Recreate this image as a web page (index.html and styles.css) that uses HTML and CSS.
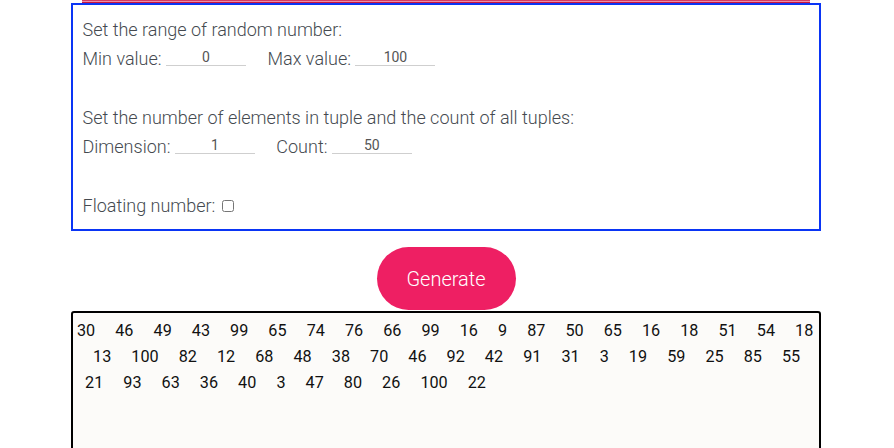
FILE: index.html
```html
<!DOCTYPE html>
<html lang="en">
<head>
<meta charset="utf-8">
<title>Random number generator</title>
<link rel="stylesheet" href="styles.css">
</head>
<body>
<div class="page">
  <div class="header-edge"></div>
  <form class="settings">
    <div class="group">
      <div class="line">Set the range of random number:</div>
      <div class="row">
        <label class="field">Min value: <input class="num" type="text" value="0"></label>
        <label class="field">Max value: <input class="num" type="text" value="100"></label>
      </div>
    </div>
    <div class="group">
      <div class="line">Set the number of elements in tuple and the count of all tuples:</div>
      <div class="row">
        <label class="field">Dimension: <input class="num" type="text" value="1"></label>
        <label class="field">Count: <input class="num" type="text" value="50"></label>
      </div>
    </div>
    <div class="group">
      <label class="line">Floating number: <input class="check" type="checkbox"></label>
    </div>
  </form>
  <button class="generate" type="button">Generate</button>
  <div class="output">30     46     49     43     99     65     74     76     66     99     16     9     87     50     65     16     18     51     54     18
    13     100     82     12     68     48     38     70     46     92     42     91     31     3     19     59     25     85     55
  21     93     63     36     40     3     47     80     26     100     22</div>
</div>
</body>
</html>
```
FILE: styles.css
```css
html, body {
  margin: 0;
  padding: 0;
  background: #ffffff;
}

.page {
  width: 750px;
  padding-right: 2px;
  margin: 0 auto;
  font-family: Roboto, "Liberation Sans", sans-serif;
}

.header-edge {
  height: 3px;
  margin: 0 11px;
  background: linear-gradient(to bottom, #d53a62 0, #d53a62 1px, #ec8ea6 1px, #ec8ea6 2px, #c9173f 2px);
}

.settings {
  margin: 0;
  border: 2px solid #0a35f5;
  padding: 11px 9px 8.5px 9.5px;
  font-size: 18px;
  font-weight: 300;
  line-height: 28.5px;
  color: #454a50;
}

.group + .group {
  margin-top: 31px;
}

.line {
  display: block;
}

.row {
  display: flex;
  gap: 21.5px;
}

.num {
  width: 80px;
  padding: 0;
  margin: 0;
  border: none;
  border-bottom: 1px solid #cfcfcf;
  background: transparent;
  font-family: Roboto, "Liberation Sans", sans-serif;
  font-size: 14px;
  font-weight: 400;
  color: #555555;
  text-align: center;
  vertical-align: 3px;
  outline: none;
}

.check {
  margin: 0 0 0 2px;
  width: 12px;
  height: 12px;
  vertical-align: 0;
}

.generate {
  display: block;
  width: 139px;
  height: 63px;
  margin: 16px auto 1px;
  padding: 0;
  border: none;
  border-radius: 32px;
  background: #ee1f63;
  color: #ffffff;
  font-family: Roboto, "Liberation Sans", sans-serif;
  font-size: 20px;
  font-weight: 300;
}

.output {
  height: 200px;
  border: 2px solid #000000;
  border-radius: 3px;
  background: #fcfbf9;
  padding: 4.5px 4px;
  font-size: 16.2px;
  line-height: 26px;
  color: #111111;
  white-space: pre;
  overflow: hidden;
}
```
